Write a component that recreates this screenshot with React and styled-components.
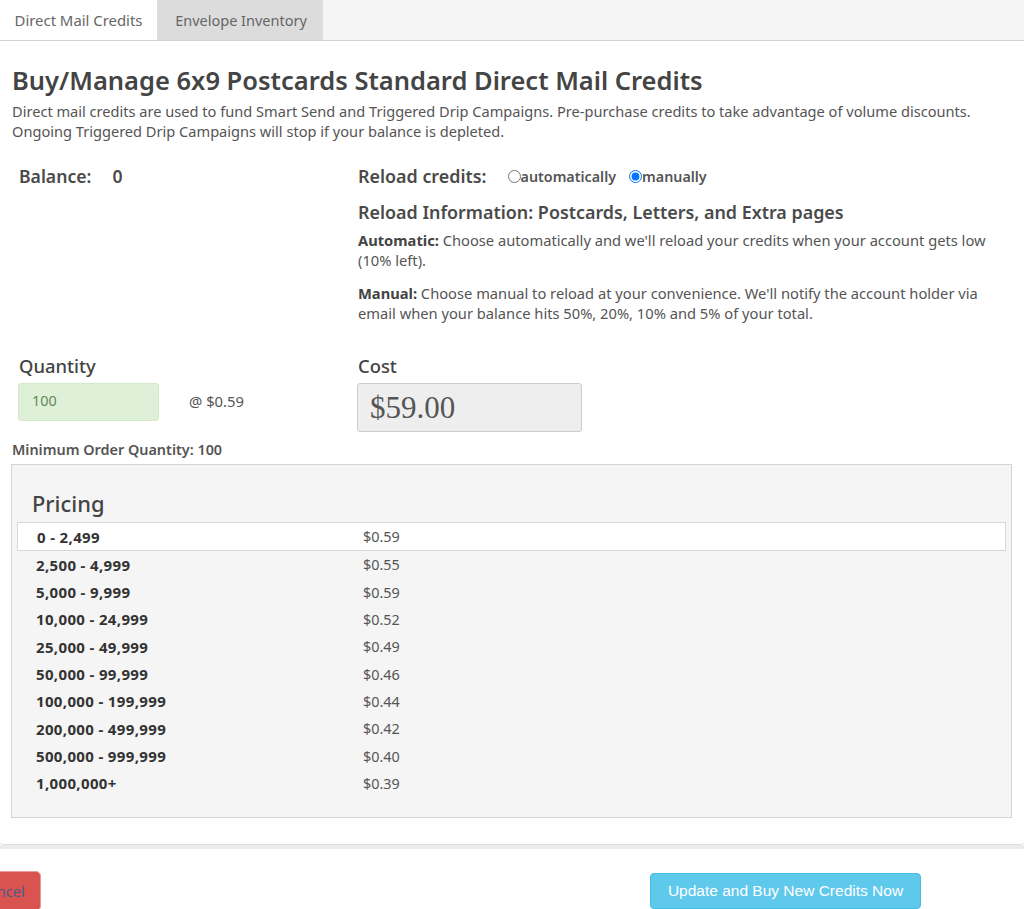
import React from "react";
import styled, { createGlobalStyle } from "styled-components";

const Global = createGlobalStyle`
  html, body { margin: 0; padding: 0; background: #fff; overflow: hidden; }
  body { font-family: "Noto Sans", "Open Sans", sans-serif; color: #4a4a4a; }
  * { box-sizing: border-box; }
`;

const Page = styled.div`
  width: 1024px;
  height: 909px;
  overflow: hidden;
`;
const TabBar = styled.div`
  display: flex;
  height: 41px;
  background: #f5f5f5;
  border-bottom: 1px solid #d4d4d4;
`;
const Tab = styled.div`
  height: 40px;
  display: flex;
  align-items: center;
  justify-content: center;
  width: ${p => p.$w}px;
  padding: 0 0 1px ${p => (p.$active ? 0 : 2)}px;
  font-size: ${p => p.$size}px;
  color: #666;
  background: ${p => (p.$active ? "#fff" : "#dcdcdc")};
`;
const Panel = styled.div`
  height: 804px;
  padding: 23px 12px 0;
  border-bottom: 1px solid #ddd;
  border-radius: 0 0 4px 4px;
`;
const Title = styled.h1`
  margin: 0;
  font-size: 25.5px;
  line-height: 32px;
  font-weight: 600;
  color: #444;
`;
const Intro = styled.p`
  margin: 6px 0 0;
  font-size: 14.6px;
  line-height: 19.5px;
  color: #555;
`;
const Columns = styled.div`
  display: grid;
  grid-template-columns: 346px 1fr;
  margin-top: 24px;
`;
const BalanceRow = styled.div`
  display: flex;
  gap: 21px;
  padding-left: 7px;
  font-size: 17.6px;
  line-height: 22px;
  font-weight: 600;
  color: #4a4a4a;
`;
const ReloadRow = styled.div`
  display: flex;
  align-items: center;
  height: 22px;
  font-size: 17.9px;
  font-weight: 600;
  color: #4a4a4a;
`;
const RadioLabel = styled.label`
  display: flex;
  align-items: center;
  font-size: 14.3px;
  font-weight: 600;
  color: #555;
  margin-left: ${p => p.$ml}px;
`;
const Radio = styled.input`
  width: 13px;
  height: 13px;
  margin: 0;
  accent-color: #0075ff;
`;
const SubHead = styled.h3`
  margin: 14px 0 0;
  font-size: 17.9px;
  line-height: 22px;
  font-weight: 600;
  color: #4a4a4a;
`;
const Info = styled.p`
  margin: ${p => p.$mt}px 0 0;
  font-size: 14.7px;
  line-height: 19.5px;
  color: #555;
  strong { font-weight: 700; color: #444; }
`;
const OrderRow = styled.div`
  display: grid;
  grid-template-columns: 346px 1fr;
  margin-top: 31px;
`;
const FieldLabel = styled.div`
  font-size: 18.4px;
  line-height: 23px;
  font-weight: 500;
  color: #444;
`;
const QtyCol = styled.div`
  padding-left: 7px;
`;
const QtyLine = styled.div`
  display: flex;
  align-items: center;
  margin: 6px 0 0 -1px;
`;
const QtyInput = styled.div`
  width: 141px;
  height: 38px;
  padding: 0 13px 3px;
  display: flex;
  align-items: center;
  background: #dff0d8;
  border: 1px solid #d6e9c6;
  border-radius: 3px;
  color: #5f8a55;
  font-size: 14.4px;
`;
const UnitPrice = styled.span`
  margin: 0 0 3px 30px;
  font-size: 14.8px;
  color: #555;
`;
const CostBox = styled.div`
  width: 225px;
  height: 49px;
  margin: 6px 0 0 -1px;
  padding: 0 12px;
  display: flex;
  align-items: center;
  background: #eee;
  border: 1px solid #ccc;
  border-radius: 3px;
  font-family: "Liberation Serif", serif;
  font-size: 31px;
  color: #555;
`;
const MinOrder = styled.div`
  margin-top: 8px;
  font-size: 14.4px;
  line-height: 19px;
  font-weight: 600;
  color: #555;
`;
const PricingCard = styled.div`
  height: 354px;
  margin: 5px 0 0 -1px;
  padding: 24px 5px 0;
  background: #f5f5f5;
  border: 1px solid #d4d4d4;
`;
const PricingTitle = styled.h2`
  margin: 0 0 0 15px;
  font-size: 21.9px;
  line-height: 29px;
  font-weight: 500;
  color: #444;
`;
const PriceRows = styled.div`
  margin-top: 4px;
`;
const PriceRow = styled.div`
  display: grid;
  grid-template-columns: ${p => (p.$current ? 326 : 327)}px 1fr;
  align-items: center;
  height: ${p => (p.$current ? 29 : 27.35)}px;
  padding-left: 19px;
  font-size: 14.4px;
  color: #555;
  ${p => p.$current && "background:#fff;border:1px solid #d8d8d8;"}
`;
const Range = styled.span`
  font-size: 15px;
  letter-spacing: 0.35px;
  font-weight: 700;
  color: #333;
`;
const Footer = styled.div`
  display: flex;
  align-items: flex-start;
  padding-top: 22px;
  border-top: 4px solid #ececec;
`;
const CancelBtn = styled.button`
  flex: none;
  width: 78px;
  height: 40px;
  margin-left: -37px;
  padding: 0;
  background: #d9534f;
  border: 1px solid #e99a97;
  border-radius: 5px;
  color: #4f5a8c;
  font-family: "Noto Sans", sans-serif;
  font-size: 14.6px;
`;
const BuyBtn = styled.button`
  flex: none;
  width: 271px;
  height: 36px;
  margin: 2px 0 0 609px;
  padding: 0;
  background: #5fc9ec;
  border: 1px solid #46bde3;
  border-radius: 4px;
  color: #fff;
  font-family: "Liberation Sans", sans-serif;
  font-size: 15.5px;
`;

const prices = [
  ["0 - 2,499", "$0.59"],
  ["2,500 - 4,999", "$0.55"],
  ["5,000 - 9,999", "$0.59"],
  ["10,000 - 24,999", "$0.52"],
  ["25,000 - 49,999", "$0.49"],
  ["50,000 - 99,999", "$0.46"],
  ["100,000 - 199,999", "$0.44"],
  ["200,000 - 499,999", "$0.42"],
  ["500,000 - 999,999", "$0.40"],
  ["1,000,000+", "$0.39"],
];

export default function App() {
  return (
    <Page>
      <Global />
      <TabBar>
        <Tab $active $w={157} $size={14.9}>Direct Mail Credits</Tab>
        <Tab $w={166} $size={14.5}>Envelope Inventory</Tab>
      </TabBar>
      <Panel>
        <Title>Buy/Manage 6x9 Postcards Standard Direct Mail Credits</Title>
        <Intro>
          Direct mail credits are used to fund Smart Send and Triggered Drip Campaigns. Pre-purchase credits to take advantage of volume discounts.
          <br />
          Ongoing Triggered Drip Campaigns will stop if your balance is depleted.
        </Intro>
        <Columns>
          <BalanceRow><span>Balance:</span><span>0</span></BalanceRow>
          <div>
            <ReloadRow>
              Reload credits:
              <RadioLabel $ml={21}><Radio type="radio" name="reload" readOnly />automatically</RadioLabel>
              <RadioLabel $ml={13}><Radio type="radio" name="reload" defaultChecked />manually</RadioLabel>
            </ReloadRow>
            <SubHead>Reload Information: Postcards, Letters, and Extra pages</SubHead>
            <Info $mt={8}><strong>Automatic:</strong> Choose automatically and we'll reload your credits when your account gets low (10% left).</Info>
            <Info $mt={14}><strong>Manual:</strong> Choose manual to reload at your convenience. We'll notify the account holder via email when your balance hits 50%, 20%, 10% and 5% of your total.</Info>
          </div>
        </Columns>
        <OrderRow>
          <QtyCol>
            <FieldLabel>Quantity</FieldLabel>
            <QtyLine>
              <QtyInput>100</QtyInput>
              <UnitPrice>@ $0.59</UnitPrice>
            </QtyLine>
          </QtyCol>
          <div>
            <FieldLabel>Cost</FieldLabel>
            <CostBox>$59.00</CostBox>
          </div>
        </OrderRow>
        <MinOrder>Minimum Order Quantity: 100</MinOrder>
        <PricingCard>
          <PricingTitle>Pricing</PricingTitle>
          <PriceRows>
            {prices.map(([r, c], i) => (
              <PriceRow key={r} $current={i === 0}>
                <Range>{r}</Range>
                <span>{c}</span>
              </PriceRow>
            ))}
          </PriceRows>
        </PricingCard>
      </Panel>
      <Footer>
        <CancelBtn>Cancel</CancelBtn>
        <BuyBtn>Update and Buy New Credits Now</BuyBtn>
      </Footer>
    </Page>
  );
}
